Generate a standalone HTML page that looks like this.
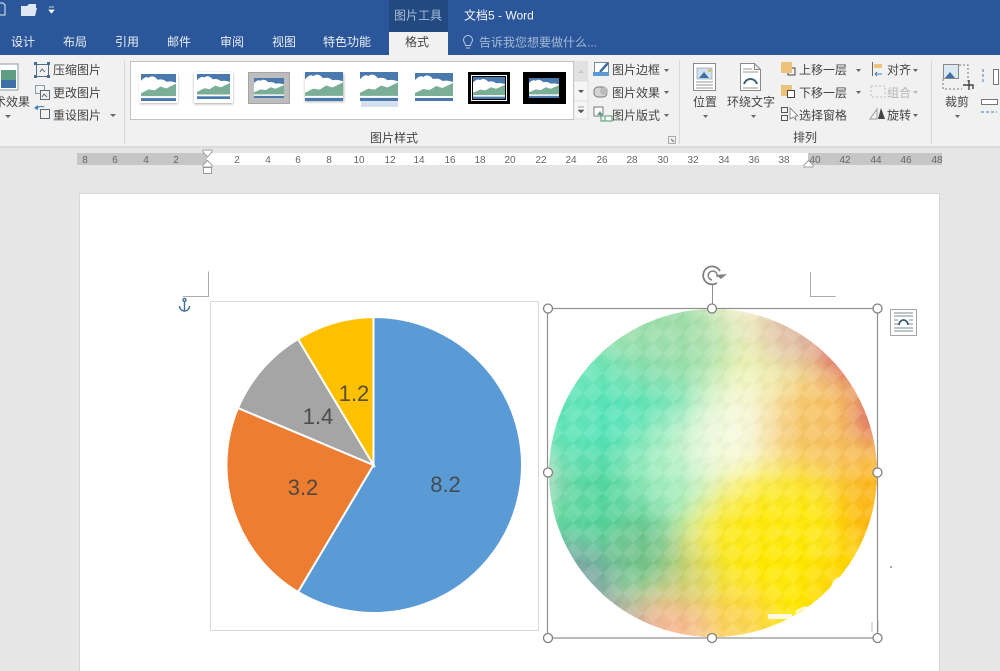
<!DOCTYPE html>
<html><head><meta charset="utf-8"><style>
html,body{margin:0;padding:0;background:#e6e6e6;width:1000px;height:671px;overflow:hidden}
svg{display:block;overflow:hidden}
text{font-family:"Liberation Sans","Noto Sans CJK SC",sans-serif}
.t{font-size:12px;fill:#444}
.w{font-size:12px;fill:#e8eef7}
.r text{font-size:10px;fill:#666;text-anchor:middle}
.l{font-size:22px;fill:#404040;text-anchor:middle;opacity:.88}
.ar{fill:#666}
.ic{fill:none;stroke:#5a6a78;stroke-width:1}
</style></head><body>
<svg width="1000" height="671" viewBox="0 0 1000 671" xmlns="http://www.w3.org/2000/svg">
<defs>
<symbol id="pic" viewBox="0 0 36 28" preserveAspectRatio="none">
<rect width="36" height="28" fill="#fff"/>
<rect width="36" height="9" fill="#4a79ad"/>
<path d="M0 7C3 4 5 2 8 4C11 1 15 3 17 6C21 5 24 6 26 8C30 7 33 8 36 9V20H0Z" fill="#fff"/>
<path d="M0 20L8 16L14 17L20 13L26 15L36 10V23H0Z" fill="#7bae97"/>
<rect y="25" width="36" height="3" fill="#4a79ad"/>
</symbol>
<filter id="sh" x="-20%" y="-20%" width="140%" height="140%"><feGaussianBlur stdDeviation="1.2"/></filter>
<filter id="soft" filterUnits="userSpaceOnUse" x="480" y="240" width="470" height="431"><feGaussianBlur stdDeviation="13"/></filter>
<clipPath id="cc"><circle cx="713" cy="473" r="164"/></clipPath>
<radialGradient id="g1"><stop stop-color="#4fe2b8"/><stop offset=".6" stop-color="#4fe2b8" stop-opacity=".85"/><stop offset="1" stop-color="#4fe2b8" stop-opacity="0"/></radialGradient>
<radialGradient id="g2"><stop stop-color="#50d49a"/><stop offset=".6" stop-color="#50d49a" stop-opacity=".85"/><stop offset="1" stop-color="#50d49a" stop-opacity="0"/></radialGradient>
<radialGradient id="g3"><stop stop-color="#c8dcc8"/><stop offset=".5" stop-color="#c8dcc8" stop-opacity=".8"/><stop offset="1" stop-color="#c8dcc8" stop-opacity="0"/></radialGradient>
<radialGradient id="g4"><stop stop-color="#98dca8"/><stop offset=".6" stop-color="#98dca8" stop-opacity=".8"/><stop offset="1" stop-color="#98dca8" stop-opacity="0"/></radialGradient>
<radialGradient id="g5"><stop stop-color="#f6f0cc"/><stop offset=".5" stop-color="#f6f0cc" stop-opacity=".8"/><stop offset="1" stop-color="#f6f0cc" stop-opacity="0"/></radialGradient>
<radialGradient id="g6"><stop stop-color="#f8fae0"/><stop offset=".5" stop-color="#f8fae0" stop-opacity=".85"/><stop offset="1" stop-color="#f8fae0" stop-opacity="0"/></radialGradient>
<radialGradient id="g7"><stop stop-color="#a8eec0"/><stop offset=".6" stop-color="#a8eec0" stop-opacity=".8"/><stop offset="1" stop-color="#a8eec0" stop-opacity="0"/></radialGradient>
<radialGradient id="g8"><stop stop-color="#f8bc58"/><stop offset=".6" stop-color="#f8c060" stop-opacity=".85"/><stop offset="1" stop-color="#f8c868" stop-opacity="0"/></radialGradient>
<radialGradient id="g9"><stop stop-color="#d84c58"/><stop offset=".6" stop-color="#dc5860" stop-opacity=".85"/><stop offset="1" stop-color="#dc6468" stop-opacity="0"/></radialGradient>
<radialGradient id="g10"><stop stop-color="#dcb0a0"/><stop offset=".6" stop-color="#dcb0a0" stop-opacity=".7"/><stop offset="1" stop-color="#dcb0a0" stop-opacity="0"/></radialGradient>
<radialGradient id="g11"><stop stop-color="#ffa800"/><stop offset=".6" stop-color="#ffb000" stop-opacity=".85"/><stop offset="1" stop-color="#ffb000" stop-opacity="0"/></radialGradient>
<radialGradient id="g12"><stop stop-color="#ffe800"/><stop offset=".65" stop-color="#ffe800" stop-opacity=".9"/><stop offset="1" stop-color="#ffe800" stop-opacity="0"/></radialGradient>
<radialGradient id="g13"><stop stop-color="#ffd000"/><stop offset=".6" stop-color="#ffd000" stop-opacity=".85"/><stop offset="1" stop-color="#ffd000" stop-opacity="0"/></radialGradient>
<radialGradient id="g14"><stop stop-color="#f8b08c"/><stop offset=".6" stop-color="#f8b08c" stop-opacity=".85"/><stop offset="1" stop-color="#f8b08c" stop-opacity="0"/></radialGradient>
<radialGradient id="g15"><stop stop-color="#fcd050"/><stop offset=".6" stop-color="#fcd050" stop-opacity=".85"/><stop offset="1" stop-color="#fcd050" stop-opacity="0"/></radialGradient>
<radialGradient id="g16"><stop stop-color="#7e9ca4"/><stop offset=".6" stop-color="#7e9ca4" stop-opacity=".85"/><stop offset="1" stop-color="#7e9ca4" stop-opacity="0"/></radialGradient>
<radialGradient id="g17"><stop stop-color="#b0a09a"/><stop offset=".6" stop-color="#b0a09a" stop-opacity=".85"/><stop offset="1" stop-color="#b0a09a" stop-opacity="0"/></radialGradient>
<radialGradient id="g18"><stop stop-color="#70c088"/><stop offset=".6" stop-color="#70c088" stop-opacity=".8"/><stop offset="1" stop-color="#70c088" stop-opacity="0"/></radialGradient>
<radialGradient id="g19"><stop stop-color="#d0d068"/><stop offset=".6" stop-color="#d0d068" stop-opacity=".7"/><stop offset="1" stop-color="#d0d068" stop-opacity="0"/></radialGradient>
<pattern id="dm" width="20" height="20" patternUnits="userSpaceOnUse" x="3" y="3">
<polygon points="10,0 20,10 10,20 0,10" fill="#fff" fill-opacity=".1"/>
<polygon points="0,0 10,0 0,10" fill="#000" fill-opacity=".02"/>
<polygon points="20,20 10,20 20,10" fill="#000" fill-opacity=".02"/>
</pattern>
<pattern id="dm2" width="40" height="40" patternUnits="userSpaceOnUse" x="3" y="3">
<polygon points="20,0 40,20 20,40 0,20" fill="#fff" fill-opacity=".05"/>
</pattern>
</defs>

<rect width="1000" height="671" fill="#e6e6e6"/>
<!-- title -->
<rect width="1000" height="55" fill="#2b579a"/>
<rect x="389" width="59" height="32" fill="#234a80"/>
<path d="M-1 3H3L5 5V15H-1" fill="#2b579a" stroke="#e8eef7"/>
<path d="M21 8V6H27L29 4H36V8H37L35 16H21Z" fill="#dfe7f2"/>
<path d="M49 7H54M49 10H54L51.500 13Z" fill="#fff" stroke="#fff" stroke-width=".8"/>
<text x="394" y="19.500" class="w" style="fill:#a9bcd8">图片工具</text>
<text x="464" y="19.500" class="w" style="fill:#f2f5fa">文档5 - Word</text>
<g class="w">
<text x="11" y="46">设计</text><text x="63" y="46">布局</text><text x="115" y="46">引用</text><text x="167" y="46">邮件</text><text x="220" y="46">审阅</text><text x="272" y="46">视图</text><text x="323" y="46">特色功能</text>
</g>
<rect x="389" y="32" width="59" height="24" fill="#f1f1f1"/>
<text x="405" y="46" class="t">格式</text>
<path d="M465.500 45.500C465.500 43 463.500 42.500 463.500 40A4.500 4.500 0 0 1 472.500 40C472.500 42.500 470.500 43 470.500 45.500ZM466 48H470" fill="none" stroke="#b7c7e0"/>
<text x="479" y="46.500" class="w" style="fill:#a3b8d6">告诉我您想要做什么...</text>

<!-- ribbon -->
<rect y="55" width="1000" height="92" fill="#f1f1f1"/>
<rect y="146" width="1000" height="2" fill="#dcdcdc"/>
<rect x="124" y="60" width="1" height="84" fill="#dadada"/>
<rect x="679" y="60" width="1" height="84" fill="#dadada"/>
<rect x="931" y="60" width="1" height="84" fill="#dadada"/>

<!-- left group -->
<rect x="-1" y="64" width="19" height="26" fill="#fff" stroke="#8a9aa5"/>
<rect x="1" y="70" width="15" height="10" fill="#5f9d86"/><rect x="1" y="80" width="15" height="8" fill="#3f70a5"/>
<text x="-6" y="106" class="t">术效果</text>
<path d="M5 115h6l-3 3z" class="ar"/>
<rect x="36.500" y="64.500" width="12" height="12" class="ic"/><path d="M40 72l2-3 3 3" class="ic"/>
<rect x="34" y="62" width="3" height="3" fill="#3f6e9f"/><rect x="47" y="62" width="3" height="3" fill="#3f6e9f"/><rect x="34" y="75" width="3" height="3" fill="#3f6e9f"/><rect x="47" y="75" width="3" height="3" fill="#3f6e9f"/>
<text x="53" y="74" class="t">压缩图片</text>
<rect x="35.500" y="85.500" width="9" height="8" fill="none" stroke="#8a9aa5"/><rect x="40.500" y="90.500" width="9" height="9" fill="#f1f1f1" stroke="#5a6a78"/><path d="M42 97l2-3 3 3" class="ic"/>
<text x="53" y="97" class="t">更改图片</text>
<path d="M36 109a6 5 0 0 1 8-2" fill="none" stroke="#3f7fb0"/><path d="M34 108l4-3v5z" fill="#3f7fb0"/><rect x="40.500" y="109.500" width="9" height="9" fill="#f1f1f1" stroke="#5a6a78"/>
<text x="53" y="119.500" class="t">重设图片</text>
<path d="M110 114h6l-3 3z" class="ar"/>

<!-- gallery -->
<rect x="130.500" y="61.500" width="443" height="58" fill="#fff" stroke="#c2c2c2"/>
<rect x="574" y="61" width="14" height="20" fill="#e2e2e2"/>
<rect x="574" y="81" width="14" height="20" fill="#f5f5f5" stroke="#d5d5d5" stroke-width=".6"/>
<rect x="574" y="101" width="14" height="18" fill="#f5f5f5" stroke="#d5d5d5" stroke-width=".6"/>
<path d="M578 73h6l-3-3z" fill="#c8c8c8"/><path d="M578 90h6l-3 3z" fill="#555"/><path d="M578 107h6M578 110h6l-3 3z" fill="#555" stroke="#555" stroke-width=".5"/>

<rect x="140" y="74" width="38" height="30" fill="#999" filter="url(#sh)" opacity=".7"/>
<rect x="139" y="72" width="39" height="31" fill="#fff"/>
<use href="#pic" x="141" y="74" width="35" height="27"/>
<rect x="194" y="73" width="39" height="31" fill="#aaa" filter="url(#sh)"/>
<rect x="194" y="72" width="39" height="31" fill="#fff"/>
<use href="#pic" x="197" y="74" width="33" height="25"/>
<rect x="248.500" y="72.500" width="41" height="31" fill="#bdbdbd" stroke="#a5a5a5"/>
<use href="#pic" x="254" y="78" width="30" height="20"/>
<rect x="305" y="74" width="39" height="28" fill="#888" filter="url(#sh)" opacity=".6"/>
<use href="#pic" x="305" y="72" width="38" height="29"/>
<use href="#pic" x="360" y="72" width="38" height="29"/>
<rect x="361" y="101" width="37" height="6" fill="#a9c2dc" opacity=".5"/>
<use href="#pic" x="415" y="73" width="38" height="28"/>
<rect x="468" y="72" width="42" height="32" fill="#000"/><rect x="471" y="75" width="36" height="26" fill="#fff"/><rect x="472" y="76" width="34" height="24" fill="#000"/><use href="#pic" x="473" y="77" width="32" height="22"/>
<rect x="523" y="72" width="43" height="32" fill="#000"/><use href="#pic" x="529" y="78" width="30" height="20"/>
<text x="370" y="142" class="t">图片样式</text>

<!-- picture actions -->
<rect x="594.500" y="62.500" width="14" height="10" fill="#fff" stroke="#7a8a98"/><path d="M600 72l8-9" stroke="#3f70a5" stroke-width="2.500"/><rect x="593" y="72" width="16" height="4" fill="#5b9bd5"/>
<text x="612" y="74" class="t">图片边框</text><path d="M664 69h5l-2.500 3z" class="ar"/>
<rect x="594" y="87" width="13" height="10" rx="4" fill="#d5d5d5" stroke="#777"/><circle cx="604" cy="91" r="4" fill="#bbb"/>
<text x="612" y="97" class="t">图片效果</text><path d="M664 91h5l-2.500 3z" class="ar"/>
<rect x="594" y="107" width="9" height="9" fill="#fff" stroke="#777"/><path d="M597 115l3-4 3 4" fill="#5f9d86"/><path d="M601 115v6h4" fill="none" stroke="#4c9a6a"/><rect x="605" y="116" width="7" height="5" fill="#fff" stroke="#4c9a6a"/>
<text x="612" y="119.500" class="t">图片版式</text><path d="M664 114h5l-2.500 3z" class="ar"/>
<rect x="668.500" y="136.500" width="7" height="7" fill="none" stroke="#999" stroke-width=".8"/><path d="M671 139l3 3" stroke="#666"/>

<!-- arrange -->
<rect x="693.500" y="63.500" width="22" height="27" fill="#fff" stroke="#8a8a8a"/><rect x="697" y="68" width="15" height="11" fill="#cfe0ef" stroke="#7c94a8" stroke-width=".6"/><path d="M699 78l5-6 5 6z" fill="#3f70a5"/><rect x="708" y="69" width="3" height="3" fill="#e8b860"/><path d="M696 82h17M696 85h17M696 88h17" stroke="#999"/>
<text x="693" y="106" class="t">位置</text><path d="M703 115h5l-2.500 3z" class="ar"/>
<path d="M740.500 63.500h14l6 6v21h-20zM754.500 63.500v6h6" fill="#fff" stroke="#8a8a8a"/><path d="M743 69h9M743 72h15M743 88h15" stroke="#999"/><path d="M744 84a7 8 0 0 1 13 0" fill="none" stroke="#3f5f80" stroke-width="2"/>
<text x="727" y="106" class="t">环绕文字</text><path d="M751 115h5l-2.500 3z" class="ar"/>
<rect x="781" y="62" width="11" height="11" fill="#edc27a"/><path d="M792 68h3v7h-7v-2" fill="none" stroke="#444"/>
<text x="799" y="74" class="t">上移一层</text><path d="M856 69h5l-2.500 3z" class="ar"/>
<rect x="781" y="85" width="11" height="11" fill="#edc27a"/><rect x="787.500" y="90.500" width="7" height="7" fill="#fff" stroke="#444"/>
<text x="799" y="97" class="t">下移一层</text><path d="M856 91h5l-2.500 3z" class="ar"/>
<rect x="781.500" y="107.500" width="6" height="5" fill="none" stroke="#555"/><rect x="781.500" y="115.500" width="6" height="5" fill="none" stroke="#555"/><path d="M790 108v11l3-2 3 3-1-4h3z" fill="#fff" stroke="#777" stroke-width=".8"/>
<text x="799" y="119.500" class="t">选择窗格</text>
<path d="M872.500 62v14" stroke="#666"/><rect x="874" y="64" width="8" height="4" fill="#edc27a"/><path d="M875 74h7M875 74l2-2M875 74l2 2" stroke="#3f7fb0" fill="none"/>
<text x="887" y="74" class="t">对齐</text><path d="M913 69h5l-2.500 3z" class="ar"/>
<rect x="871" y="86" width="14" height="11" fill="none" stroke="#c0c0c0" stroke-dasharray="2 2"/>
<text x="887" y="97" class="t" style="fill:#b3b3b3">组合</text><path d="M913 91h5l-2.500 3z" fill="#bbb"/>
<path d="M870 119l7-10v10z" fill="none" stroke="#999"/><path d="M878 119l3-11 4 11z" fill="#444"/>
<text x="887" y="119.500" class="t">旋转</text><path d="M913 114h5l-2.500 3z" class="ar"/>
<text x="793" y="141.500" class="t">排列</text>

<!-- crop -->
<rect x="943.500" y="64.500" width="15" height="14" fill="#dce8f2" stroke="#8a8a8a"/><path d="M945 78l5-6 5 6z" fill="#3f70a5"/>
<path d="M959 65h9v17M943 79v10h19" fill="none" stroke="#777" stroke-dasharray="2 2"/>
<path d="M969 80v10M963 85h10v4" fill="none" stroke="#444" stroke-width="1.400"/>
<text x="945" y="106" class="t">裁剪</text><path d="M955 115h5l-2.500 3z" class="ar"/>
<path d="M983 69v14" stroke="#3f7fb0" stroke-dasharray="3 2"/><rect x="993.500" y="69.500" width="5" height="15" fill="#fff" stroke="#777"/>
<rect x="981.500" y="99.500" width="16" height="5" fill="#fff" stroke="#777"/><path d="M981 112h16" stroke="#3f7fb0" stroke-dasharray="3 2"/>

<!-- ruler -->
<rect x="77" y="153" width="130" height="12" fill="#c6c6c6"/>
<rect x="207" y="153" width="601" height="12" fill="#fff"/>
<rect x="808" y="153" width="134" height="12" fill="#c6c6c6"/>
<g class="r">
<text x="85" y="163">8</text><text x="115" y="163">6</text><text x="146" y="163">4</text><text x="176" y="163">2</text>
<text x="237" y="163">2</text><text x="268" y="163">4</text><text x="298" y="163">6</text><text x="329" y="163">8</text><text x="359" y="163">10</text><text x="390" y="163">12</text><text x="419" y="163">14</text><text x="450" y="163">16</text><text x="480" y="163">18</text><text x="510" y="163">20</text><text x="541" y="163">22</text><text x="571" y="163">24</text><text x="602" y="163">26</text><text x="632" y="163">28</text><text x="663" y="163">30</text><text x="693" y="163">32</text><text x="724" y="163">34</text><text x="754" y="163">36</text><text x="784" y="163">38</text><text x="815" y="163">40</text><text x="845" y="163">42</text><text x="876" y="163">44</text><text x="906" y="163">46</text><text x="937" y="163">48</text>
</g>
<path d="M203 150h9v2l-4.500 5-4.500-5z" fill="#fff" stroke="#888" stroke-width=".8"/>
<path d="M203 167v-2l4.500-4.500 4.500 4.500v2z" fill="#fff" stroke="#888" stroke-width=".8"/>
<rect x="203.500" y="167.500" width="8" height="6" fill="#fff" stroke="#888" stroke-width=".8"/>
<path d="M804 167v-2l4.500-4.500 4.500 4.500v2z" fill="#fff" stroke="#888" stroke-width=".8"/>

<!-- page -->
<rect x="79" y="193" width="861" height="478" fill="#d6d6d6"/>
<rect x="80" y="194" width="859" height="477" fill="#fff"/>
<path d="M183 296.500h25.500v-25" fill="none" stroke="#aaa"/>
<path d="M810.500 272v24.500h25" fill="none" stroke="#aaa"/>
<g fill="none" stroke="#3f7198" stroke-width="1.400"><circle cx="184.500" cy="300" r="1.500"/><path d="M184.500 302v9M179.500 306a5 5 0 0 0 10 0"/></g>
<path d="M215 306v5h-4M212 309.500l-1 1.500 2 1" fill="none" stroke="#999" stroke-width=".8"/>

<!-- chart -->
<rect x="210.500" y="301.500" width="328" height="329" fill="#fff" stroke="#d9d9d9"/>
<g stroke="#fff" stroke-width="2">
<path d="M373.500 465V317a148 148 0 1 1-75.500 275z" fill="#5b9bd5"/>
<path d="M373.500 465L298 592A148 148 0 0 1 238 408z" fill="#ed7d31"/>
<path d="M373.500 465L238 408A148 148 0 0 1 298 339z" fill="#a5a5a5"/>
<path d="M373.500 465L298 339A148 148 0 0 1 373.500 317z" fill="#ffc000"/>
</g>
<text x="445.500" y="492" class="l">8.2</text>
<text x="303" y="495" class="l">3.2</text>
<text x="318" y="424" class="l">1.4</text>
<text x="354" y="401" class="l">1.2</text>

<!-- colour wheel -->
<g clip-path="url(#cc)">
<g filter="url(#soft)">
<rect x="500" y="260" width="430" height="411" fill="#eef2b0"/>
<circle cx="615" cy="430" r="125" fill="url(#g1)"/>
<circle cx="600" cy="530" r="90" fill="url(#g2)"/>
<circle cx="530" cy="480" r="38" fill="url(#g3)"/>
<circle cx="670" cy="320" r="85" fill="url(#g4)"/>
<circle cx="745" cy="300" r="50" fill="url(#g5)"/>
<circle cx="675" cy="465" r="60" fill="url(#g7)"/>
<circle cx="738" cy="440" r="75" fill="url(#g6)"/>
<circle cx="835" cy="430" r="85" fill="url(#g8)"/>
<circle cx="795" cy="330" r="45" fill="url(#g10)"/>
<circle cx="850" cy="350" r="42" fill="url(#g9)"/>
<circle cx="880" cy="415" r="36" fill="url(#g9)"/>
<circle cx="785" cy="560" r="110" fill="url(#g12)"/>
<circle cx="895" cy="510" r="72" fill="url(#g11)"/>
<circle cx="860" cy="600" r="65" fill="url(#g13)"/>
<circle cx="775" cy="605" r="48" fill="url(#g12)"/>
<circle cx="735" cy="625" r="45" fill="url(#g15)"/>
<circle cx="672" cy="625" r="46" fill="url(#g14)"/>
<circle cx="685" cy="575" r="42" fill="url(#g19)"/>
<circle cx="640" cy="555" r="48" fill="url(#g18)"/>
<circle cx="565" cy="590" r="60" fill="url(#g16)"/>
<circle cx="615" cy="630" r="40" fill="url(#g17)"/>
</g>
<rect x="540" y="300" width="345" height="345" fill="url(#dm)"/>
<rect x="540" y="300" width="345" height="345" fill="url(#dm2)"/>
</g>
<g fill="none" stroke="#fff" opacity=".85">
<path d="M768 616.500H792" stroke-width="5"/>
<path d="M796 613Q806 603 812 612M816 610Q824 598 828 608" stroke-width="2.500"/>
<path d="M832 600Q830 580 840 578Q846 590 838 596M842 590Q842 572 850 566" stroke-width="2.500"/>
</g>
<circle cx="891" cy="567" r="1" fill="#888"/>
<path d="M872 622v10M878 620v12" stroke="#ddd" stroke-width="2"/>

<!-- selection -->
<rect x="547.500" y="308.500" width="330" height="329.500" fill="none" stroke="#909090" stroke-width="1.200"/>
<path d="M712.500 285v23" stroke="#909090"/>
<g fill="#fff" stroke="#808080" stroke-width="1.300">
<circle cx="548" cy="308.500" r="4.500"/><circle cx="712" cy="308.500" r="4.500"/><circle cx="877.500" cy="308.500" r="4.500"/>
<circle cx="548" cy="472.500" r="4.500"/><circle cx="877.500" cy="472.500" r="4.500"/>
<circle cx="548" cy="638" r="4.500"/><circle cx="712" cy="638" r="4.500"/><circle cx="877.500" cy="638" r="4.500"/>
</g>
<path d="M717 283a9 9 0 1 1 3-12" fill="none" stroke="#808080" stroke-width="1.800"/>
<path d="M712 280a4.500 4.500 0 1 1 5-3" fill="none" stroke="#808080" stroke-width="1.500"/>
<path d="M716 275l11-1-6 5z" fill="#808080"/>
<rect x="890.500" y="309.500" width="26" height="26" fill="#fff" stroke="#a5a5a5"/>
<path d="M894 313h19M894 316h19M894 331h19M894 328h19M894 320h4M909 320h4M894 324h4M909 324h4" stroke="#7d8b96"/>
<path d="M899 325a4.500 5 0 0 1 9 0" fill="none" stroke="#3f5f78" stroke-width="1.800"/>
</svg>
</body></html>
